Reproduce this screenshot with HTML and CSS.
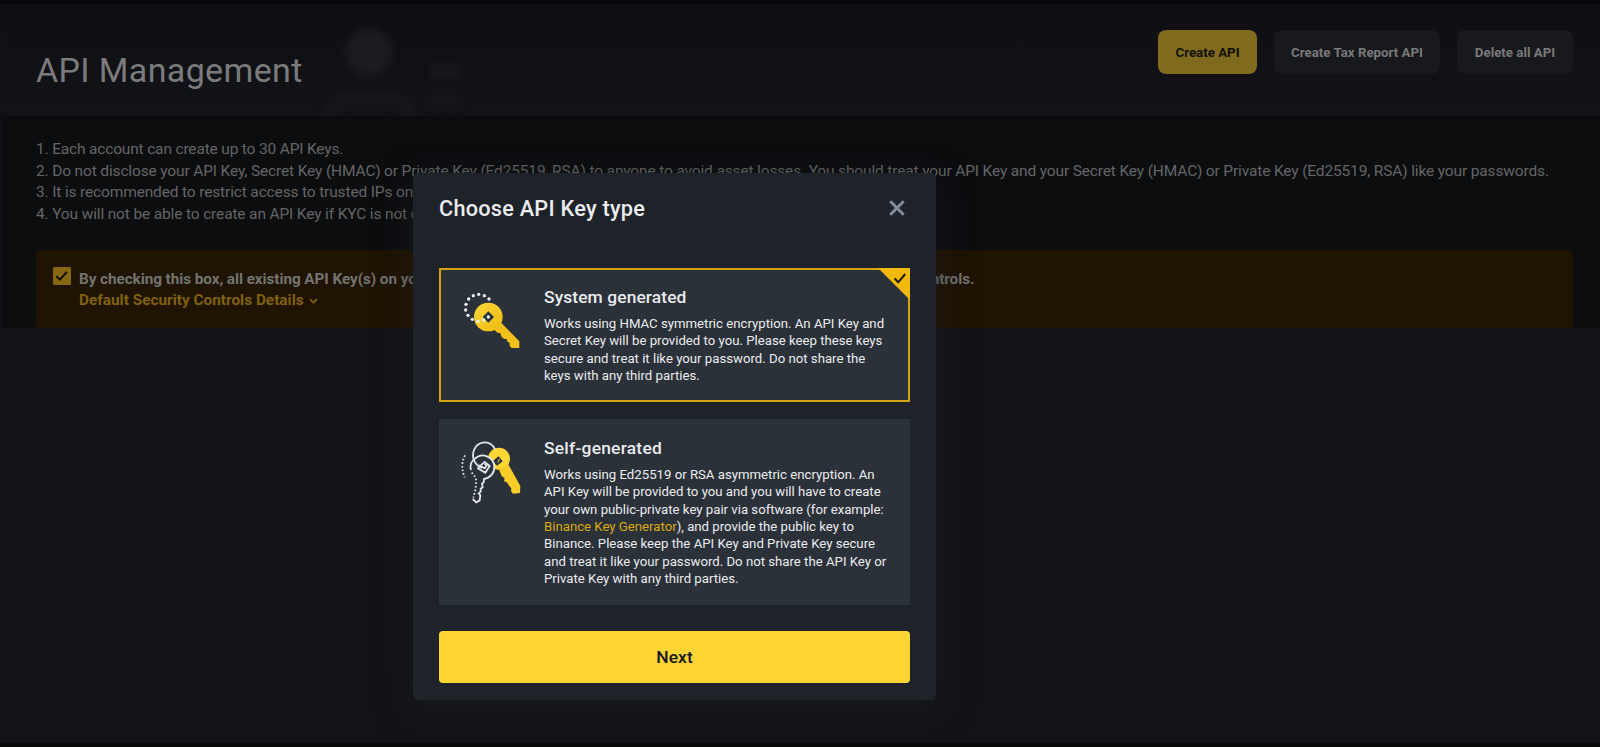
FILE: index.html
```html
<!DOCTYPE html>
<html lang="en">
<head>
<meta charset="utf-8">
<title>API Management</title>
<link rel="stylesheet" href="styles.css">
</head>
<body>
<div class="page">
  <header class="header">
    <h1 class="title">API Management</h1>
    <svg class="ghost" width="160" height="112" viewBox="0 0 160 112">
      <defs><filter id="soft" x="-20%" y="-20%" width="140%" height="140%" color-interpolation-filters="sRGB"><feGaussianBlur stdDeviation="3.5"/></filter></defs>
      <g filter="url(#soft)">
        <circle cx="59" cy="48" r="23.5" fill="#1b1c1f"/>
        <path d="M18 118C20 96 32 93 59 93s39 3 42 25" fill="none" stroke="#16171b" stroke-width="12"/>
        <rect x="121" y="59" width="29" height="15" fill="#17181c"/>
        <rect x="121" y="90" width="29" height="13" fill="#15161a"/>
      </g>
    </svg>
    <div class="actions">
      <button class="btn btn-primary">Create API</button>
      <button class="btn btn-tax">Create Tax Report API</button>
      <button class="btn btn-delete">Delete all API</button>
    </div>
  </header>
  <section class="content">
    <div class="notes">
      <div class="note note-1">1. Each account can create up to 30 API Keys.</div>
      <div class="note">2. Do not disclose your API Key, Secret Key (HMAC) or Private Key (Ed25519, RSA) to anyone to avoid asset losses. You should treat your API Key and your Secret Key (HMAC) or Private Key (Ed25519, RSA) like your passwords.</div>
      <div class="note">3. It is recommended to restrict access to trusted IPs only to increase your account security.</div>
      <div class="note">4. You will not be able to create an API Key if KYC is not completed.</div>
    </div>
    <div class="warning">
      <svg class="checkbox" width="18" height="18" viewBox="0 0 18 18"><rect width="18" height="18" rx="1.5" fill="#886711"/><path d="M3.3 9.2l3.6 3.5 7-7.8" fill="none" stroke="#0d0c08" stroke-width="1.9"/></svg>
      <div class="warning-text">
        <div class="warning-main">By checking this box, all existing API Key(s) on your master account and sub-account(s) will be subject to Default Security Controls.</div>
        <div class="warning-link"><span class="warning-label">Default Security Controls Details</span><svg width="9" height="7" viewBox="0 0 9 7"><path d="M1 1.2l3.5 3.6L8 1.2" fill="none" stroke="#80610f" stroke-width="1.8"/></svg></div>
      </div>
    </div>
  </section>
</div>
<div class="overlay">
  <div class="modal">
    <div class="modal-head">
      <h2 class="modal-title">Choose API Key type</h2>
      <svg class="close" width="16" height="16" viewBox="0 0 16 16"><path d="M1.3 1.3l13.4 13.4M14.7 1.3L1.3 14.7" stroke="#848e9c" stroke-width="2.9"/></svg>
    </div>
    <div class="card card-selected">
      <svg class="icon" width="80" height="80" viewBox="0 0 240 240">
        <defs><linearGradient id="gold" x1="0" y1="0" x2="1" y2="1"><stop offset="0" stop-color="#fbd73a"/><stop offset="1" stop-color="#efb90f"/></linearGradient></defs>
        <circle cx="115" cy="111" r="43" fill="url(#gold)"/>
        <path d="M152 127l56 57v20h-23l-6-6v-8l-8-7v-6h-7l-6-3-5-7v-5l-6-4h-5l-12-12z" fill="#f3c01b"/>
        <path d="M115 94l17 17-17 17-17-17z" fill="#29313a"/>
        <g fill="#f0f1f3"><circle cx="117" cy="57" r="5"/><circle cx="103" cy="47" r="5"/><circle cx="86" cy="43" r="5"/><circle cx="70" cy="47" r="5"/><circle cx="56" cy="57" r="5"/><circle cx="48" cy="73" r="5"/><circle cx="47" cy="90" r="5"/><circle cx="54" cy="106" r="5"/><circle cx="67" cy="118" r="5"/><circle cx="84" cy="124" r="5"/><circle cx="101" cy="120" r="5"/><circle cx="115" cy="111" r="5"/></g>
      </svg>
      <div class="card-body">
        <h3 class="card-title card-title-1">System generated</h3>
        <p class="desc">Works using HMAC symmetric encryption. An API Key and<br>Secret Key will be provided to you. Please keep these keys<br>secure and treat it like your password. Do not share the<br>keys with any third parties.</p>
      </div>
      <svg class="corner" width="32" height="32" viewBox="0 0 32 32"><path d="M0 0h32v32z" fill="#f0b90b"/><path d="M16.6 10.4l3.6 3.9 7-8.3" fill="none" stroke="#17191c" stroke-width="2"/></svg>
    </div>
    <div class="card card-self">
      <svg class="icon" width="80" height="80" viewBox="0 0 240 240">
        <circle cx="147" cy="86" r="33" fill="#fdd835"/>
        <path d="M174 101l37 67-1 21-21 2-6-7 1-9-7-8-5-9-10-5 2-8-9-7-9-22z" fill="#f8cd28"/>
        <path d="M146 79l12 15-17 13-13-14z" fill="#29313a"/><path d="M143 98l6-12" stroke="#fdd835" stroke-width="3"/>
        <circle cx="98" cy="111" r="34" fill="#29313a"/>
        <g fill="none" stroke="#e2e5e8" stroke-width="5.5">
          <path d="M136 59C126 39 109 36 98 38C74 43 62 69 74 95Q80 107 96 114"/>
          <path d="M75 86C96 66 130 80 133 108C135 127 122 143 102 147l-1 10-5 4 2 11-6 4v9l-6 5 5 6-2 15-10 6-11-10"/>
          <path d="M75 86Q57 98 63 120"/>
          <path d="M92 106l12-10 15 12-13 20-22-13 5-8 15 8 6-9-6-4"/>
          <path d="M65 128l10 12 4 12-3 28-6 23" stroke-dasharray="5 6"/>
          <path d="M45 76Q29 105 44 142" stroke-dasharray="5 6"/>
        </g>
      </svg>
      <div class="card-body">
        <h3 class="card-title card-title-2">Self-generated</h3>
        <p class="desc">Works using Ed25519 or RSA asymmetric encryption. An<br>API Key will be provided to you and you will have to create<br>your own public-private key pair via software (for example:<br><a class="link">Binance Key Generator</a>), and provide the public key to<br>Binance. Please keep the API Key and Private Key secure<br>and treat it like your password. Do not share the API Key or<br>Private Key with any third parties.</p>
      </div>
    </div>
    <button class="next">Next</button>
  </div>
</div>
</body>
</html>
```
FILE: styles.css
```css
* { box-sizing: border-box; }
body {
  margin: 0;
  background: #060709;
  font-family: Roboto, "Liberation Sans", sans-serif;
  overflow: hidden;
}
h1, h2, h3, p { margin: 0; }
button { border: 0; padding: 0; font-family: inherit; }
.page {
  height: 747px;
  padding: 4px 0 0 1px;
  border-bottom: 4px solid #090a0c;
  background: linear-gradient(#060709 4px, #121317 4px);
}
.header {
  height: 112px;
  display: flex;
  align-items: flex-start;
  padding: 0 27px 0 35px;
  background: linear-gradient(#0d0f12, #121318);
}
.title {
  width: 274px;
  padding-top: 44px;
  font-size: 34px;
  line-height: 44px;
  font-weight: 400;
  letter-spacing: .36px;
  color: #7b7b7d;
  white-space: nowrap;
}
.actions { margin-left: auto; padding-top: 26px; display: flex; gap: 17px; }
.btn {
  height: 44px;
  border-radius: 8px;
  font-size: 13.3px;
  font-weight: 700;
  color: #79797b;
  background: #18191c;
}
.btn-primary { width: 99px; color: #121108; background: #806a1d; }
.btn-tax { width: 166px; }
.btn-delete { width: 116px; }
.content { height: 212px; padding: 23px 27px 0 35px; background: #0c0d0f; }
.notes { color: #646567; font-size: 15.5px; line-height: 21.67px; letter-spacing: -.148px; white-space: nowrap; }
.note-1 { letter-spacing: -.17px; }
.warning {
  height: 78px;
  margin-top: 24px;
  padding: 17px 17px 0;
  display: flex;
  gap: 8px;
  border-radius: 4px;
  background: #1f1302;
}
.warning-text { padding-top: 2px; font-size: 15.3px; line-height: 21.67px; font-weight: 700; white-space: nowrap; }
.warning-main { color: #747372; letter-spacing: -.065px; }
.warning-link { color: #80610f; display: flex; align-items: center; gap: 5px; }
.warning-label { letter-spacing: .03px; }
.overlay {
  position: absolute;
  inset: 0;
  padding: 173px 0 0 413px;
}
.modal {
  width: 523px;
  height: 527px;
  padding: 0 26px;
  border-radius: 5px;
  background: #1e2329;
  box-shadow: 0 9px 36px rgba(28, 30, 34, .6);
}
.modal-head { height: 95px; padding: 20px 5px 0 0; display: flex; justify-content: space-between; }
.modal-title { font-size: 21.7px; line-height: 32px; font-weight: 500; letter-spacing: .25px; color: #eaecef; }
.close { margin-top: 7px; }
.card { position: relative; display: flex; background: #2b3139; }
.card-selected { height: 134px; border: 2px solid #d4a113; padding: 10px 0 0 9px; }
.card-self { height: 186px; margin-top: 17px; padding: 11px 0 0 11px; }
.card-self .card-body { padding-top: 1px; }
.card-body { margin-left: 14px; white-space: nowrap; color: #eaecef; }
.card-title { font-size: 17.4px; line-height: 24px; font-weight: 500; margin-top: 5px; }
.card-title-1 { letter-spacing: .1px; }
.card-title-2 { letter-spacing: .24px; }
.desc { margin-top: 6px; font-size: 13.2px; line-height: 17.33px; color: #eaecef; }
.link { color: #dba90f; }
.corner { position: absolute; right: -2px; top: -2px; }
.next {
  display: block;
  width: 471px;
  height: 52px;
  margin-top: 26px;
  border-radius: 4px;
  background: #fcd535;
  color: #14171c;
  font-size: 17.4px;
  font-weight: 500;
  letter-spacing: .1px;
}
```
